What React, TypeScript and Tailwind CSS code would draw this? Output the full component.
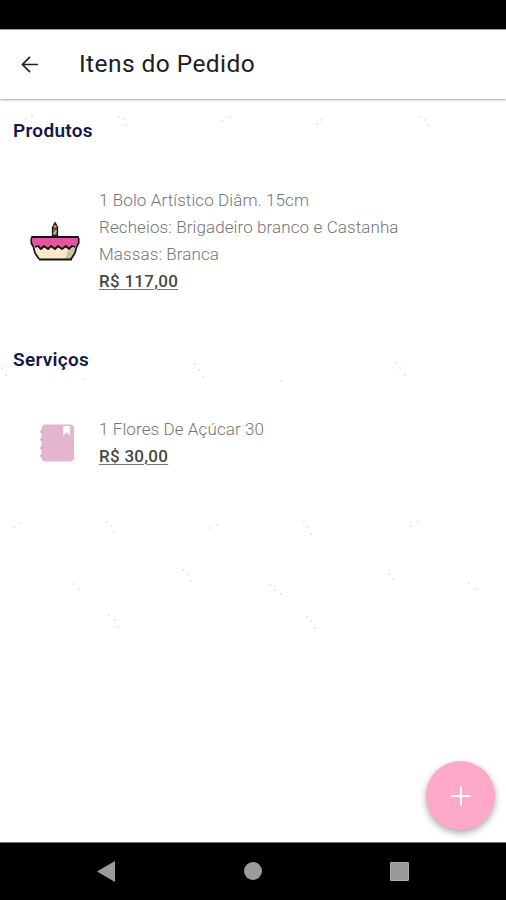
import type { ReactNode } from 'react';

interface OrderItem {
  id: number;
  details: string[];
  price: string;
  icon: ReactNode;
}

interface OrderSectionProps {
  title: string;
  items: OrderItem[];
}

const sprinkles = [
  [26, 119], [32, 116], [119, 117], [124, 119], [126, 125], [222, 121], [230, 117],
  [317, 124], [321, 120], [421, 117], [425, 120], [428, 125], [2, 368], [6, 375],
  [85, 379], [195, 364], [199, 370], [203, 377], [281, 381], [396, 363], [400, 368],
  [405, 375], [14, 527], [21, 523], [107, 522], [111, 526], [114, 532], [210, 528],
  [217, 525], [304, 522], [308, 527], [311, 534], [411, 526], [418, 522], [183, 570],
  [188, 574], [191, 581], [74, 584], [79, 589], [270, 585], [275, 590], [281, 594],
  [389, 574], [393, 579], [469, 583], [476, 589], [109, 615], [115, 620], [118, 627],
  [307, 617], [311, 621], [315, 628],
];

function CakeIcon() {
  return (
    <svg width="50" height="40" viewBox="0 0 50 40">
      <path d="M4 22L5 32L9 38H42L45 32L46 22Z" fill="#f7e9c9" />
      <path d="M37 31L46 25L45 32L42 38H34Q38 35 37 31Z" fill="#cdbfa3" />
      <path
        d="M2 16H48V23L45 26L42 25L39 28L36 25L32 28L28 25L25 28L21 25L18 28L14 25L11 28L8 25L5 26L2 23Z"
        fill="#e4559f"
      />
      <path
        d="M5 26L8 25L11 28L14 25L18 28L21 25L25 28L28 25L32 28L36 25L39 28L42 25L45 26"
        fill="none"
        stroke="#171317"
        strokeWidth="1.8"
        strokeLinejoin="round"
      />
      <path d="M2 16H48" stroke="#171317" strokeWidth="2.2" strokeLinecap="round" />
      <path d="M1.3 17V22L3.5 26L5 32L9 38M48.7 17V22L46.5 26L45 32L41 38" fill="none" stroke="#171317" strokeWidth="1.7" />
      <path d="M9 38.5H42" stroke="#171317" strokeWidth="2" />
      <path d="M22.5 15V6H27.5V15Z" fill="#6b6b62" stroke="#171317" strokeWidth="1.3" />
      <path d="M23.5 13L26.5 10" stroke="#e3cf98" strokeWidth="1.2" />
      <path d="M25 0.5Q23 3 22.5 6Q23 8 25 8Q27.5 7 27.5 5Q27 3 25 0.5Z" fill="#332018" />
      <circle cx="25" cy="5.5" r="1.5" fill="#dd9447" />
    </svg>
  );
}

function NotebookIcon() {
  return (
    <svg className="relative left-[3px]" width="35" height="38" viewBox="0 0 36 38">
      <path
        d="M5 0H31Q35 0 35 4V34Q35 38 31 38H5Q2 38 1.5 34H1Q-1 32 1.5 30V26H1Q-1 24 1.5 22V17H1Q-1 15 1.5 13V9H1Q-1 7 1.5 5Q2 0 5 0Z"
        fill="#e5b5d0"
      />
      <path d="M24 1.5H31V11.5L27.5 8L24 11.5Z" fill="#fff" />
      <path d="M1 8H3M1 16H3M1 24H3M1 32H3" stroke="#cb9ab7" strokeWidth="1" />
    </svg>
  );
}

const products: OrderItem[] = [
  {
    id: 1,
    details: ['1 Bolo Artístico Diâm. 15cm', 'Recheios: Brigadeiro branco e Castanha', 'Massas: Branca'],
    price: 'R$ 117,00',
    icon: <CakeIcon />,
  },
];

const services: OrderItem[] = [
  { id: 2, details: ['1 Flores De Açúcar 30'], price: 'R$ 30,00', icon: <NotebookIcon /> },
];

function OrderSection({ title, items }: OrderSectionProps) {
  return (
    <section>
      <h2 className="pl-[13px] text-[19px] leading-6 font-semibold tracking-[0.3px] text-[#171747]">{title}</h2>
      {items.map((item) => (
        <div key={item.id} className="mt-[44px] flex items-center">
          <div className="flex w-[99px] justify-center pl-[10px]">{item.icon}</div>
          <div className="text-[17px] leading-[27px] font-light tracking-[0.1px] text-[#757575]">
            {item.details.map((detail) => (
              <p key={detail} className="whitespace-nowrap">{detail}</p>
            ))}
            <p className="font-medium tracking-[0.27px] text-[#484848] underline decoration-[#777] decoration-1 underline-offset-2">
              {item.price}
            </p>
          </div>
        </div>
      ))}
    </section>
  );
}

export default function App() {
  return (
    <div className="relative flex h-[900px] w-[506px] flex-col overflow-hidden bg-white font-[Roboto,sans-serif]">
      <svg className="pointer-events-none absolute inset-0" width="506" height="900">
        {sprinkles.map(([x, y]) => (
          <circle key={`${x}-${y}`} cx={x} cy={y} r="0.9" fill="#e0e0e0" />
        ))}
      </svg>
      <div className="h-[29px] shrink-0 bg-black" />
      <header className="z-10 flex h-[70px] shrink-0 items-center border-t border-[#999] bg-white pl-[21px] shadow-[0_1px_2px_rgba(0,0,0,0.35)]">
        <button aria-label="Voltar" className="mr-[40px]">
          <svg width="18" height="17" viewBox="0 0 19 18" fill="none" stroke="#202020" strokeWidth="1.8">
            <path d="M18 9H2M9.5 1L1.5 9L9.5 17" />
          </svg>
        </button>
        <h1 className="pb-px text-[24.5px] tracking-[0.43px] text-[#202020]">Itens do Pedido</h1>
      </header>
      <main className="relative flex flex-1 flex-col gap-[53px] pt-5">
        <OrderSection title="Produtos" items={products} />
        <OrderSection title="Serviços" items={services} />
        <button
          aria-label="Adicionar"
          className="absolute right-[11px] bottom-[12px] flex size-[69px] items-center justify-center rounded-full bg-[#ffa9ca] shadow-[0_3px_7px_rgba(0,0,0,0.35)]"
        >
          <svg width="20" height="20" viewBox="0 0 20 20" stroke="#fff" strokeWidth="2">
            <path d="M10 0.5V19.5M0.5 10H19.5" />
          </svg>
        </button>
      </main>
      <nav className="flex h-[58px] shrink-0 items-center justify-between border-t border-[#777] bg-black px-[97px] pb-px">
        <svg width="18" height="21" viewBox="0 0 18 21" fill="#9b9b9b">
          <path d="M0 10.5L18 0V21Z" />
        </svg>
        <div className="size-[18px] rounded-full bg-[#9b9b9b]" />
        <div className="size-[19px] rounded-[1px] border border-[#adadad] bg-[#989898]" />
      </nav>
    </div>
  );
}
